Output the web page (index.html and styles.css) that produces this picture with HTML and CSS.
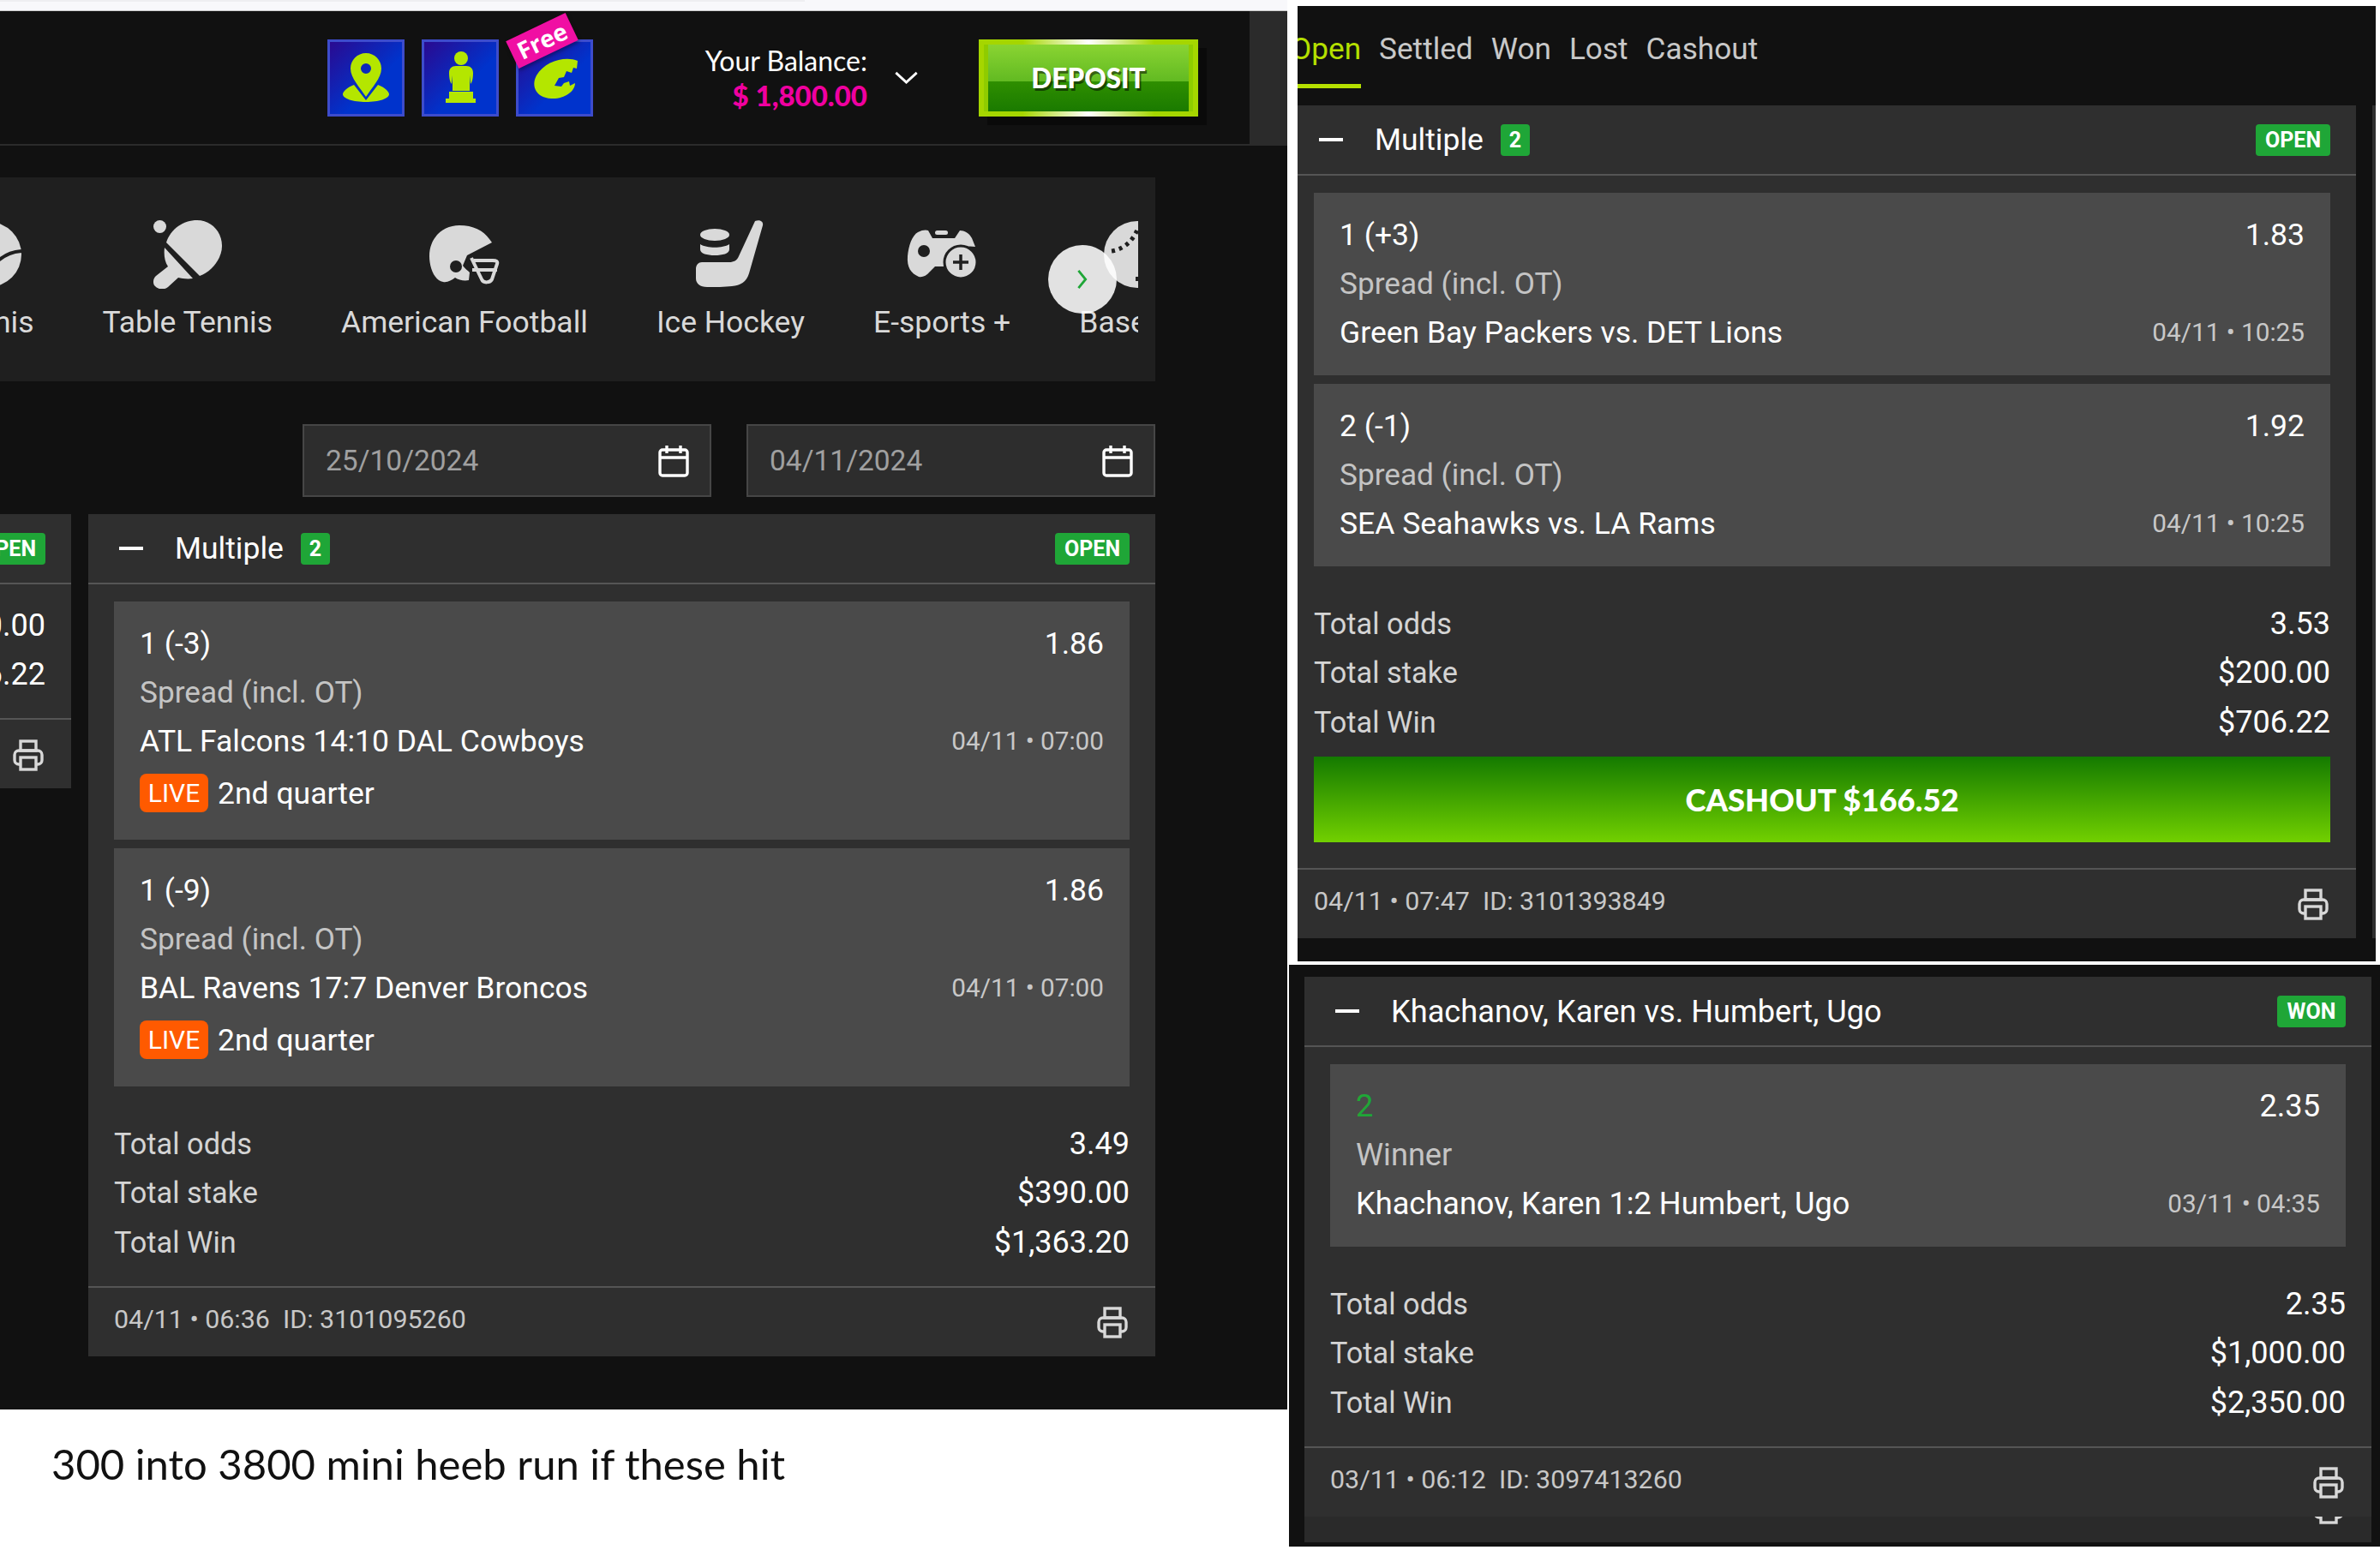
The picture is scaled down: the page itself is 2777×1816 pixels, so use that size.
FILE: index.html
```html
<!DOCTYPE html>
<html lang="en">
<head>
    <meta charset="UTF-8">
    <title>Bets</title>
    <link rel="stylesheet" href="styles.css">
</head>
<body>
    <svg class="sprite" width="0" height="0">
        <symbol id="print" viewBox="0 0 36 37">
            <rect x="9" y="2" width="18" height="11" fill="none" stroke="#d8d8d8" stroke-width="3.4"/>
            <rect x="2" y="13" width="32" height="16" rx="5" fill="none" stroke="#d8d8d8" stroke-width="3.4"/>
            <rect x="9" y="21" width="18" height="14" fill="#2f2f2f" stroke="#d8d8d8" stroke-width="3.4"/>
        </symbol>
        <symbol id="calendar" viewBox="0 0 36 38">
            <rect x="2" y="6" width="32" height="30" rx="3" fill="none" stroke="#fff" stroke-width="3.4"/>
            <path d="M2 15h32M10 1v9M26 1v9" fill="none" stroke="#fff" stroke-width="3.4"/>
        </symbol>
    </svg>

    <div class="collage">
        <div class="left-col">
            <div class="browser-strip"><div class="browser-tab"></div></div>
            <div class="panel panel-main">
                <div class="topbar">
                    <div class="promo-icons">
                        <div class="promo">
                            <svg viewBox="0 0 84 84"><path d="M42 13c-10 0-18 8-18 18 0 11 11 22 18 33 7-11 18-22 18-33 0-10-8-18-18-18zm0 12a6 6 0 1 1 0 12 6 6 0 0 1 0-12z" fill="#b4e600"/><path d="M28 50C20 53 15 58 15 61c0 5 12 9 27 9s27-4 27-9c0-3-5-8-13-11L42 68z" fill="#b4e600"/></svg>
                        </div>
                        <div class="promo">
                            <svg viewBox="0 0 84 84"><circle cx="43" cy="19" r="8" fill="#b4e600"/><path d="M37 28h12c5 0 8 3 8 8 0 6-1 11-3 13l-1-10v18H33V39l-1 10c-2-2-3-7-3-13 0-5 3-8 8-8z" fill="#b4e600"/><path d="M29 58h28v8h3v5H25v-5h4z" fill="#b4e600"/></svg>
                        </div>
                        <div class="promo">
                            <svg viewBox="0 0 84 84"><path d="M69 22c-14-6-38 0-48 17-7 13 0 26 17 27 15 1 28-8 28-18l-6 3-1-5-6 2-3 4-8-1 5-9 6-1 3-7 6 2 2-6 4 1z" fill="#b4e600"/></svg>
                            <div class="free">Free</div>
                        </div>
                    </div>
                    <div class="balance">
                        <div class="balance-label">Your Balance:</div>
                        <div class="balance-amount">$ 1,800.00</div>
                    </div>
                    <svg class="balance-arrow" viewBox="0 0 30 16"><path d="M2 2l13 12L28 2" fill="none" stroke="#fff" stroke-width="3"/></svg>
                    <div class="deposit"><div class="deposit-inner">DEPOSIT</div></div>
                </div>

                <div class="sports">
                    <div class="sports-clip">
                        <div class="sports-track">
                            <div class="sport">
                                <svg viewBox="0 0 80 80" width="80" height="80"><circle cx="40" cy="40" r="38" fill="#d9d9d9"/><path d="M78 36C55 38 42 52 34 76" fill="none" stroke="#1f1f1f" stroke-width="4"/></svg>
                                <span>Tennis</span>
                            </div>
                            <div class="sport">
                                <svg viewBox="0 0 80 80" width="80" height="80"><circle cx="7.500" cy="7.500" r="7.500" fill="#d9d9d9"/><path d="M15 26C20 10 35 0 51 0c17 0 29 14 29 30 0 15-12 30-26 35z" fill="#d9d9d9"/><path d="M13 32l33 36c-6 1-13 0-17-1L17 78c-5 4-12 3-16-2-2-4-1-8 2-11l14-11c-4-6-5-14-4-22z" fill="#d9d9d9"/></svg>
                                <span>Table Tennis</span>
                            </div>
                            <div class="sport">
                                <svg viewBox="0 0 82 80" width="82" height="80"><path d="M70 22l3 4-29 15-5 12c2 3 6 6 8 8l-1 9c-5 1-12 0-16-3-4 3-9 6-14 5C5 70 0 54 0 42 0 20 16 6 35 6c16 0 28 6 35 16z" fill="#d9d9d9"/><circle cx="31" cy="54" r="7" fill="#1f1f1f"/><path d="M49 44l12 25c2 5 10 4 12 0l6-18c1-3-1-4-5-4H52M50 58h29" fill="none" stroke="#d9d9d9" stroke-width="4"/></svg>
                                <span>American Football</span>
                            </div>
                            <div class="sport">
                                <svg viewBox="0 0 80 80" width="80" height="80"><ellipse cx="22" cy="17" rx="17" ry="7" fill="#d9d9d9"/><path d="M5 28c8 5 26 5 34 0v6c0 5-8 7-17 7S5 39 5 34z" fill="#d9d9d9"/><path d="M69 1c5-2 10 0 9 5L62 62c-3 10-10 14-20 15-8 1-20 1-29 1C5 78 0 74 0 68V57c0-5 3-8 7-8h32c5 0 9-2 11-7z" fill="#d9d9d9"/></svg>
                                <span>Ice Hockey</span>
                            </div>
                            <div class="sport">
                                <svg viewBox="0 0 82 80" width="82" height="80"><g transform="translate(0 12)"><rect x="33" y="0" width="15" height="5" rx="2.500" fill="#d9d9d9"/><path d="M13 2c5-3 10-3 12-2l5 9h26l6-9c5 0 11 3 14 9l4 10C70 17 58 20 50 28c-4 4-6 9-7 14H33l-6 6c-4 5-9 7-13 6C5 50 0 43 1 30 2 18 6 6 13 2z" fill="#d9d9d9"/><circle cx="20" cy="24" r="7" fill="#1f1f1f"/><circle cx="63" cy="37" r="19" fill="#d9d9d9" stroke="#1f1f1f" stroke-width="3"/><path d="M63 28v18M54 37h18" stroke="#1f1f1f" stroke-width="3.500"/></g></svg>
                                <span>E-sports +</span>
                            </div>
                            <div class="sport">
                                <svg viewBox="0 0 80 80" width="80" height="80"><circle cx="40" cy="40" r="39" fill="#d9d9d9"/><path d="M10 36C24 34 36 24 41 8" fill="none" stroke="#1f1f1f" stroke-width="5" stroke-dasharray="4 5"/><rect x="38" y="66" width="6" height="5" fill="#1f1f1f"/></svg>
                                <span>Baseball</span>
                            </div>
                        </div>
                    </div>
                    <div class="sports-next">
                        <svg viewBox="0 0 14 26" width="14" height="24"><path d="M2 2l9 11-9 11" fill="none" stroke="#1fa637" stroke-width="3"/></svg>
                    </div>
                </div>

                <div class="dates">
                    <div class="date-box">
                        <span>25/10/2024</span>
                        <svg width="36" height="38"><use href="#calendar"/></svg>
                    </div>
                    <div class="date-box">
                        <span>04/11/2024</span>
                        <svg width="36" height="38"><use href="#calendar"/></svg>
                    </div>
                </div>

                <div class="bets">
                    <div class="bet bet-cut">
                        <div class="bet-head">
                            <span class="badge status">OPEN</span>
                        </div>
                        <div class="totals">
                            <div class="total"><span class="total-value">$200.00</span></div>
                            <div class="total"><span class="total-value">$706.22</span></div>
                        </div>
                        <div class="bet-foot">
                            <svg class="print" width="36" height="37"><use href="#print"/></svg>
                        </div>
                    </div>

                    <div class="bet bet-main">
                        <div class="bet-head">
                            <span class="minus"></span>
                            <span class="bet-title">Multiple</span>
                            <span class="badge count">2</span>
                            <span class="badge status">OPEN</span>
                        </div>
                        <div class="legs">
                            <div class="leg">
                                <div class="leg-row"><span>1 (-3)</span><span class="odds">1.86</span></div>
                                <div class="leg-row market">Spread (incl. OT)</div>
                                <div class="leg-row"><span>ATL Falcons 14:10 DAL Cowboys</span><span class="kickoff">04/11 • 07:00</span></div>
                                <div class="leg-row leg-live"><span class="live">LIVE</span><span>2nd quarter</span></div>
                            </div>
                            <div class="leg">
                                <div class="leg-row"><span>1 (-9)</span><span class="odds">1.86</span></div>
                                <div class="leg-row market">Spread (incl. OT)</div>
                                <div class="leg-row"><span>BAL Ravens 17:7 Denver Broncos</span><span class="kickoff">04/11 • 07:00</span></div>
                                <div class="leg-row leg-live"><span class="live">LIVE</span><span>2nd quarter</span></div>
                            </div>
                        </div>
                        <div class="totals">
                            <div class="total"><span>Total odds</span><span class="total-value">3.49</span></div>
                            <div class="total"><span>Total stake</span><span class="total-value">$390.00</span></div>
                            <div class="total"><span>Total Win</span><span class="total-value">$1,363.20</span></div>
                        </div>
                        <div class="bet-foot">
                            <span>04/11 • 06:36&nbsp;&nbsp;ID: 3101095260</span>
                            <svg class="print" width="36" height="37"><use href="#print"/></svg>
                        </div>
                    </div>
                </div>
            </div>
            <div class="caption">300 into 3800 mini heeb run if these hit</div>
        </div>

        <div class="right-col">
            <div class="panel panel-open">
                <div class="tabs">
                    <div class="tab tab-active">Open</div>
                    <div class="tab">Settled</div>
                    <div class="tab">Won</div>
                    <div class="tab">Lost</div>
                    <div class="tab">Cashout</div>
                </div>
                <div class="open-row">
                    <div class="bet bet-open">
                        <div class="bet-head">
                            <span class="minus"></span>
                            <span class="bet-title">Multiple</span>
                            <span class="badge count">2</span>
                            <span class="badge status">OPEN</span>
                        </div>
                        <div class="legs">
                            <div class="leg">
                                <div class="leg-row"><span>1 (+3)</span><span class="odds">1.83</span></div>
                                <div class="leg-row market">Spread (incl. OT)</div>
                                <div class="leg-row"><span>Green Bay Packers vs. DET Lions</span><span class="kickoff">04/11 • 10:25</span></div>
                            </div>
                            <div class="leg">
                                <div class="leg-row"><span>2 (-1)</span><span class="odds">1.92</span></div>
                                <div class="leg-row market">Spread (incl. OT)</div>
                                <div class="leg-row"><span>SEA Seahawks vs. LA Rams</span><span class="kickoff">04/11 • 10:25</span></div>
                            </div>
                        </div>
                        <div class="totals totals-cashout">
                            <div class="total"><span>Total odds</span><span class="total-value">3.53</span></div>
                            <div class="total"><span>Total stake</span><span class="total-value">$200.00</span></div>
                            <div class="total"><span>Total Win</span><span class="total-value">$706.22</span></div>
                        </div>
                        <div class="cashout">CASHOUT $166.52</div>
                        <div class="bet-foot">
                            <span>04/11 • 07:47&nbsp;&nbsp;ID: 3101393849</span>
                            <svg class="print" width="36" height="37"><use href="#print"/></svg>
                        </div>
                    </div>
                    <div class="bet bet-sliver"></div>
                </div>
            </div>

            <div class="panel panel-won">
                <div class="bet bet-won">
                    <div class="bet-head">
                        <span class="minus"></span>
                        <span class="bet-title">Khachanov, Karen vs. Humbert, Ugo</span>
                        <span class="badge status status-won">WON</span>
                    </div>
                    <div class="legs">
                        <div class="leg">
                            <div class="leg-row"><span class="pick-won">2</span><span class="odds">2.35</span></div>
                            <div class="leg-row market">Winner</div>
                            <div class="leg-row"><span>Khachanov, Karen 1:2 Humbert, Ugo</span><span class="kickoff">03/11 • 04:35</span></div>
                        </div>
                    </div>
                    <div class="totals">
                        <div class="total"><span>Total odds</span><span class="total-value">2.35</span></div>
                        <div class="total"><span>Total stake</span><span class="total-value">$1,000.00</span></div>
                        <div class="total"><span>Total Win</span><span class="total-value">$2,350.00</span></div>
                    </div>
                    <div class="bet-foot">
                        <span>03/11 • 06:12&nbsp;&nbsp;ID: 3097413260</span>
                        <svg class="print" width="36" height="37"><use href="#print"/></svg>
                    </div>
                    <div class="next-edge">
                        <svg class="print" width="36" height="37"><use href="#print"/></svg>
                    </div>
                </div>
            </div>
        </div>
    </div>
</body>
</html>
```

FILE: styles.css
```css
* {
    box-sizing: border-box;
}
body {
    margin: 0;
    background-color: #fff;
    font-family: Roboto, Arial, sans-serif;
    font-size: 35.500px;
    color: #fff;
    overflow: hidden;
}
.sprite {
    position: absolute;
}
.collage {
    display: grid;
    grid-template-columns: 1502px 1275px;
    width: 2777px;
    height: 1816px;
}
.browser-strip {
    height: 13px;
    background-color: #f8f8fb;
    border-bottom: 1px solid #ccc;
}
.browser-tab {
    width: 939px;
    height: 2px;
    background-color: #eeeef1;
}
.panel {
    background-color: #111;
    overflow: hidden;
}
.panel-main {
    height: 1632px;
}

/* top bar */
.topbar {
    display: flex;
    align-items: center;
    height: 157px;
    padding-right: 104px;
    padding-left: 382px;
    border-bottom: 2px solid #2b2b2b;
    position: relative;
}
.topbar::after {
    content: "";
    position: absolute;
    top: 0;
    right: 0;
    bottom: 0;
    width: 44px;
    background-color: #2b2b2b;
}
.promo-icons {
    display: flex;
    gap: 20px;
    margin-right: auto;
}
.promo {
    position: relative;
    width: 90px;
    height: 90px;
    border: 3px solid #3d4ccc;
    background: linear-gradient(135deg, #2a0a90, #0033cc 60%);
}
.promo svg {
    display: block;
}
.free {
    position: absolute;
    left: -11px;
    top: -19px;
    width: 77px;
    height: 35px;
    line-height: 35px;
    text-align: center;
    background-color: #f00fa3;
    font-family: "Open Sans", Arial, sans-serif;
    font-size: 28px;
    font-weight: 700;
    transform: rotate(-25.6deg);
    box-shadow: 0 3px 4px rgba(0, 0, 0, 0.35);
}
.balance {
    font-family: Lato, Arial, sans-serif;
    font-size: 32px;
    text-align: right;
    line-height: 41px;
}
.balance-amount {
    color: #f000a0;
    font-size: 33px;
    font-weight: 900;
}
.balance-arrow {
    width: 29px;
    height: 15px;
    margin: 0 70px 0 31px;
}
.deposit {
    width: 256px;
    height: 90px;
    padding: 6px;
    background: linear-gradient(90deg, #a5d600 20%, #fff 50%, #a5d600 80%);
    box-shadow: 10px 10px 0 #0a0a0a;
}
.deposit-inner {
    height: 100%;
    display: flex;
    align-items: center;
    justify-content: center;
    background: linear-gradient(#8ad432, #62ba22 55%, #2f8f00 55%, #1a7a00);
    font-family: Lato, Arial, sans-serif;
    font-size: 31.500px;
    font-weight: 900;
    text-shadow: 2px 3px 0 rgba(0, 0, 0, 0.5);
    box-shadow: inset 5px 0 0 #8fcc00, inset -5px 0 0 #8fcc00;
}

/* sports scroller */
.sports {
    position: relative;
    width: 1348px;
    height: 238px;
    margin-top: 37px;
    padding-top: 50px;
    background-color: #1f1f1f;
}
.sports-clip {
    width: 1328px;
    overflow: hidden;
}
.sports-track {
    display: flex;
    gap: 80px;
    margin-left: -65px;
    width: 1600px;
}
.sport {
    display: flex;
    flex-direction: column;
    align-items: center;
    color: #d9d9d9;
    white-space: nowrap;
}
.sport span {
    margin-top: 18px;
    line-height: 43px;
}
.sports-next {
    position: absolute;
    left: 1223px;
    top: 79px;
    width: 80px;
    height: 80px;
    display: flex;
    align-items: center;
    justify-content: center;
    border-radius: 50%;
    background-color: rgba(255, 255, 255, 0.87);
}

/* date filter */
.dates {
    display: flex;
    justify-content: flex-end;
    gap: 41px;
    width: 1348px;
    margin-top: 50px;
}
.date-box {
    display: flex;
    align-items: center;
    justify-content: space-between;
    width: 477px;
    height: 85px;
    padding: 0 24px 0 25px;
    background-color: #2d2d2d;
    border: 2px solid #464646;
    color: #a0a0a0;
    font-size: 33.500px;
}

/* bet cards */
.bets {
    display: flex;
    gap: 20px;
    width: 1348px;
    margin-top: 20px;
    align-items: flex-start;
}
.bet {
    background-color: #2f2f2f;
}
.bet-cut {
    width: 83px;
    overflow: hidden;
    flex: none;
}
.bet-cut .bet-head,
.bet-cut .total,
.bet-cut .bet-foot {
    justify-content: flex-end;
    white-space: nowrap;
}
.bet-main {
    width: 1245px;
}
.bet-head {
    display: flex;
    align-items: center;
    height: 82px;
    padding: 0 30px 0 36px;
    border-bottom: 2px solid #555;
}
.minus {
    width: 28px;
    height: 4px;
    background-color: #fff;
    margin-right: 37px;
    flex: none;
}
.badge {
    display: flex;
    align-items: center;
    justify-content: center;
    height: 37px;
    border-radius: 4px;
    background-color: #1fa637;
    font-size: 25px;
    font-weight: 700;
}
.count {
    width: 34px;
    margin-left: 20px;
}
.status {
    width: 87px;
    margin-left: auto;
    flex: none;
}
.status-won {
    width: 80px;
}
.legs {
    display: flex;
    flex-direction: column;
    gap: 10px;
    padding: 20px 30px 0;
}
.leg {
    padding: 20px 30px 22px;
    background-color: #4a4a4a;
}
.leg-row {
    display: flex;
    justify-content: space-between;
    align-items: center;
    height: 57px;
}
.market {
    color: #c4c4c4;
    font-size: 35.200px;
}
.kickoff {
    font-size: 29.700px;
    color: #c8c8c8;
}
.leg-live {
    justify-content: flex-start;
    gap: 11px;
    height: 65px;
}
.live {
    width: 80px;
    height: 45px;
    display: flex;
    align-items: center;
    justify-content: center;
    border-radius: 8px;
    background-color: #ff5a00;
    font-size: 30px;
}
.pick-won {
    color: #1fa637;
}
.totals {
    padding: 38px 30px 22px;
}
.bet-cut .totals {
    padding-top: 19px;
}
.totals-cashout {
    padding-bottom: 11px;
}
.total {
    display: flex;
    justify-content: space-between;
    align-items: center;
    height: 57.500px;
    color: #d4d4d4;
    font-size: 34.300px;
}
.total-value {
    color: #fff;
    font-size: 36px;
}
.cashout {
    display: flex;
    align-items: center;
    justify-content: center;
    height: 100px;
    margin: 0 30px 30px;
    background: linear-gradient(#147a00, #72d000);
    font-family: Lato, Arial, sans-serif;
    font-size: 36.400px;
    font-weight: 900;
}
.bet-foot {
    display: flex;
    justify-content: space-between;
    align-items: center;
    height: 82px;
    padding: 0 32px 6px 30px;
    border-top: 2px solid #555;
    color: #c8c8c8;
    font-size: 30.400px;
}
.print {
    display: block;
    flex: none;
    margin-top: 8px;
}

/* right column */
.panel-open {
    height: 1115px;
    margin: 7px 5px 0 12px;
}
.tabs {
    display: flex;
    gap: 21px;
    height: 116px;
    margin-left: -8px;
}
.tab {
    height: 96px;
    padding-top: 29px;
    line-height: 42px;
    color: #c8c8c8;
    font-size: 35.200px;
}
.tab-active {
    color: #b5e000;
    border-bottom: 5px solid #b5e000;
}
.open-row {
    display: flex;
    gap: 19px;
    margin-left: -11px;
    width: 1269px;
}
.bet-open {
    flex: none;
    width: 1246px;
}
.bet-sliver {
    flex: 1;
    height: 972px;
}
.panel-won {
    height: 679px;
    margin: 4px 0 0 2px;
    padding: 14px 10px 0 18px;
}
.bet-won {
    height: 660px;
    overflow: hidden;
}
.bet-won .bet-title,
.bet-won .leg-row {
    font-size: 36.200px;
}
.bet-won .kickoff {
    font-size: 29.700px;
}
.next-edge {
    display: flex;
    justify-content: flex-end;
    height: 30px;
    padding-right: 32px;
    background-color: #2a2a2a;
    overflow: hidden;
}
.next-edge .print {
    margin-top: -28px;
}

.caption {
    padding: 35px 0 0 60px;
    color: #111;
    font-family: Lato, Arial, sans-serif;
    font-size: 49px;
    line-height: 56px;
}
```
